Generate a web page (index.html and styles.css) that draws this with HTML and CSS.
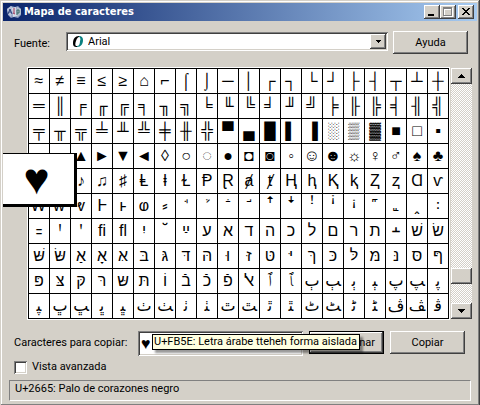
FILE: index.html
```html
<!DOCTYPE HTML>
<html lang="es">
<head>
<meta charset="utf-8">
<title>Mapa de caracteres</title>
<link rel="stylesheet" href="styles.css">
</head>

<body>
<div class="window">
	<div class="titlebar">
		<svg class="app-icon" width="16" height="16" viewBox="0 0 16 16">
			<path d="M1 5l4-3 4 1 3-1 3 3v6l-3 3-4-1-3 1-3-3z" fill="#8c9bc0"/>
			<path d="M1 5l4-3 2 2-2 9-3-3z" fill="#b9c3da"/>
			<path d="M6 4l4-1 1 9-4 1z" fill="#d5dbe6"/>
			<path d="M11 3l4 2v5l-4 3z" fill="#b4bfce"/>
			<path d="M2 10l2-5 2 5M3 8h2" stroke="#28407c" fill="none"/>
			<path d="M8 4v5M7 9l2 1" stroke="#9c3358" fill="none"/>
			<path d="M11 11V6h2v3h-2" stroke="#356b66" fill="none"/>
		</svg>
		<h1>Mapa de caracteres</h1>
		<button class="tbtn" aria-label="Minimizar"><svg width="16" height="14"><path d="M4 9h6v2H4z"/></svg></button>
		<button class="tbtn" aria-label="Maximizar" disabled><svg width="16" height="14"><path d="M4 3h9v9H4zM5 5v6h7V5z" fill="#fff" fill-rule="evenodd"/><path d="M3 2h9v9H3zM4 4v6h7V4z" fill="#808080" fill-rule="evenodd"/></svg></button>
		<button class="tbtn close" aria-label="Cerrar"><svg width="16" height="14" shape-rendering="crispEdges"><path d="M4 3h2v1h1v1h2V4h1V3h2v1h-1v1h-1v1H9v1h1v1h1v1h1v1h-2V9H9V8H7v1H6v1H4V9h1V8h1V7h1V6H6V5H5V4H4z"/></svg></button>
	</div>

	<div class="content">
		<div class="font-row">
			<label for="font">Fuente:</label>
			<div class="combo">
				<svg class="font-icon" width="12" height="13" viewBox="0 0 12 13">
					<path d="M7 1C3 1 1 4 1 8c0 3 1 4 4 4v-1C3 11 3 9 4 6c1-3 2-4 3-4z" fill="#000"/>
					<path d="M7 1c3 0 4 2 4 4 0 4-2 7-6 7v-1c2 0 3-2 3-5 1-2 0-4-1-4z" fill="#0a8080"/>
				</svg>
				<select id="font">
					<option>Arial</option>
				</select>
				<span class="arrow"><svg width="5" height="3" shape-rendering="crispEdges"><path d="M0 0h5v1H4v1H3v1H2V2H1V1H0z"/></svg></span>
			</div>
			<button class="btn">Ayuda</button>
		</div>

		<div class="map">
			<table class="chars"><tbody id="chars"></tbody></table>
			<div class="scroll">
				<button aria-label="Arriba"><svg width="7" height="4" shape-rendering="crispEdges"><path d="M3 0h1v1h1v1h1v1h1v1H0V3h1V2h1V1h1z"/></svg></button>
				<div class="thumb"></div>
				<button aria-label="Abajo"><svg width="7" height="4" shape-rendering="crispEdges"><path d="M0 0h7v1H6v1H5v1H4v1H3V3H2V2H1V1H0z"/></svg></button>
			</div>
			<div class="zoomed">&#x2665;</div>
		</div>

		<div class="copy-row">
			<label for="copy">Caracteres para copiar:</label>
			<input type="text" id="copy" value="&#x2665;">
			<button class="btn default">Seleccionar</button>
			<button class="btn">Copiar</button>
			<div class="tooltip">U+FB5E: Letra árabe tteheh forma aislada</div>
		</div>

		<div class="check-row">
			<input type="checkbox" id="advanced">
			<label for="advanced">Vista avanzada</label>
		</div>
	</div>
	<div class="status">U+2665: Palo de corazones negro</div>
</div>
<script>
	// code points of each row, single values or [first, last]
	const rows = [
		[0x2248, [0x2260, 0x2261], [0x2264, 0x2265], 0x2302, 0x2310, [0x2320, 0x2321], 0x2500, 0x2502, 0x250C, 0x2510, 0x2514, 0x2518, 0x251C, 0x2524, 0x252C, 0x2534, 0x253C],
		[[0x2550, 0x2563]],
		[[0x2564, 0x256C], 0x2580, 0x2584, 0x2588, 0x258C, [0x2590, 0x2593], [0x25A0, 0x25A1], 0x25AA],
		[0x25AB, 0x25AC, 0x25B2, 0x25BA, 0x25BC, 0x25C4, 0x25CA, 0x25CB, 0x25CC, 0x25CF, 0x25D8, 0x25D9, 0x25E6, [0x263A, 0x263C], 0x2640, 0x2642, 0x2660, 0x2663],
		[[0x2665, 0x2666], [0x266A, 0x266B], 0x266F, [0x2C60, 0x2C6D], 0x2C71],
		[[0x2C72, 0x2C77], 0x2E17, [0xA717, 0xA721], [0xA788, 0xA789]],
		[[0xA78A, 0xA78C], [0xFB01, 0xFB02], [0xFB1D, 0xFB2B]],
		[[0xFB2C, 0xFB36], [0xFB38, 0xFB3C], 0xFB3E, [0xFB40, 0xFB41], 0xFB43],
		[0xFB44, [0xFB46, 0xFB58]],
		[[0xFB59, 0xFB6C]]
	];
	const tbody = document.querySelector("#chars");
	rows.forEach(row => {
		const tr = tbody.insertRow();
		row.forEach(item => {
			const [first, last] = Array.isArray(item) ? item : [item, item];
			for (let code = first; code <= last; code++) {
				tr.insertCell().textContent = String.fromCodePoint(code);
			}
		});
	});
</script>
</body>
</html>
```
FILE: styles.css
```css
* {margin:0; padding:0; box-sizing:border-box;}
body {background:#d4d0c8; color:#000; font:11px/14px Roboto,"DejaVu Sans",sans-serif;}
button, input, select {font:inherit; color:inherit; border:0; border-radius:0; background:#d4d0c8;}

.window {padding:3px; box-shadow:inset -1px -1px #404040, inset 1px 1px #d4d0c8, inset -2px -2px #808080, inset 2px 2px #fff;}

.titlebar {display:flex; align-items:center; height:18px; padding:0 3px; background:linear-gradient(to right,#0a246a,#a6caf0);}
.titlebar h1 {flex:1; margin-left:2px; font:bold 11px/18px "DejaVu Sans Condensed","DejaVu Sans",sans-serif; color:#fff;}
.tbtn {width:16px; height:14px; box-shadow:inset -1px -1px #404040, inset 1px 1px #fff, inset -2px -2px #808080;}
.tbtn svg {display:block;}
.close {margin-left:2px;}

.content {padding:10px 9px 0 11px;}
.font-row {display:flex; align-items:flex-start; gap:5px;}
.font-row label {width:47px; padding-top:6px;}
.combo {flex:1; display:flex; align-items:center; height:19px; margin-top:1px; padding:2px; background:#fff;}
.combo, #copy, .check-row input {box-shadow:inset 1px 1px #808080, inset -1px -1px #fff, inset 2px 2px #404040, inset -2px -2px #d4d0c8;}
.font-icon {margin:0 4px;}
.combo select {flex:1; min-width:0; height:15px; appearance:none; background:transparent;}
.arrow {display:flex; align-items:center; justify-content:center; width:16px; height:15px; background:#d4d0c8;}
.btn {width:75px; height:23px;}
.btn, .arrow, .scroll button, .thumb {box-shadow:inset -1px -1px #404040, inset 1px 1px #fff, inset -2px -2px #808080;}
.default {border:1px solid #000;}

.map {position:relative; display:flex; gap:2px; margin:14px -4px 0 14px;}
.chars {flex:1; width:100%; table-layout:fixed; border-collapse:collapse; background:#fff; outline:1px solid #fff; font:16px/20px "Liberation Sans","DejaVu Sans",sans-serif;}
.chars td {height:25px; border:1px solid #000; text-align:center; overflow:hidden; white-space:nowrap;}
.scroll {flex:none; display:flex; flex-direction:column; width:21px; background:repeating-conic-gradient(#fff 0 25%,#d4d0c8 0 50%) 0 0/2px 2px;}
.scroll button, .thumb {display:flex; align-items:center; justify-content:center; height:16px; background:#d4d0c8;}
.thumb {margin:auto 0 19px;}
.zoomed {position:absolute; left:-25px; top:85px; width:74px; height:54px; padding-right:4px; border:solid #000; border-width:1px 3px 3px 0; background:#fff; font:44px/50px "Liberation Sans",sans-serif; text-align:center;}

.copy-row {position:relative; display:flex; align-items:flex-start; gap:6px; margin:12px 3px 0 0;}
.copy-row label {width:118px; padding-top:5px; white-space:nowrap;}
#copy {flex:1; min-width:0; height:25px; padding:2px 3px; background:#fff; font:16px/20px "Liberation Sans",sans-serif;}
.tooltip {position:absolute; left:138px; top:3px; height:16px; padding:0 2px 0 1px; border:1px solid #000; background:#ffffe1; white-space:nowrap; box-shadow:3px 3px 2px rgba(0,0,0,0.4);}

.check-row {display:flex; align-items:center; gap:5px; margin-top:4px;}
.check-row input {width:13px; height:13px; appearance:none; background:#fff;}
.status {height:21px; margin:6px 6px 2px; padding:1px 5px; border:1px solid; border-color:#808080 #fff #fff #808080;}
```
